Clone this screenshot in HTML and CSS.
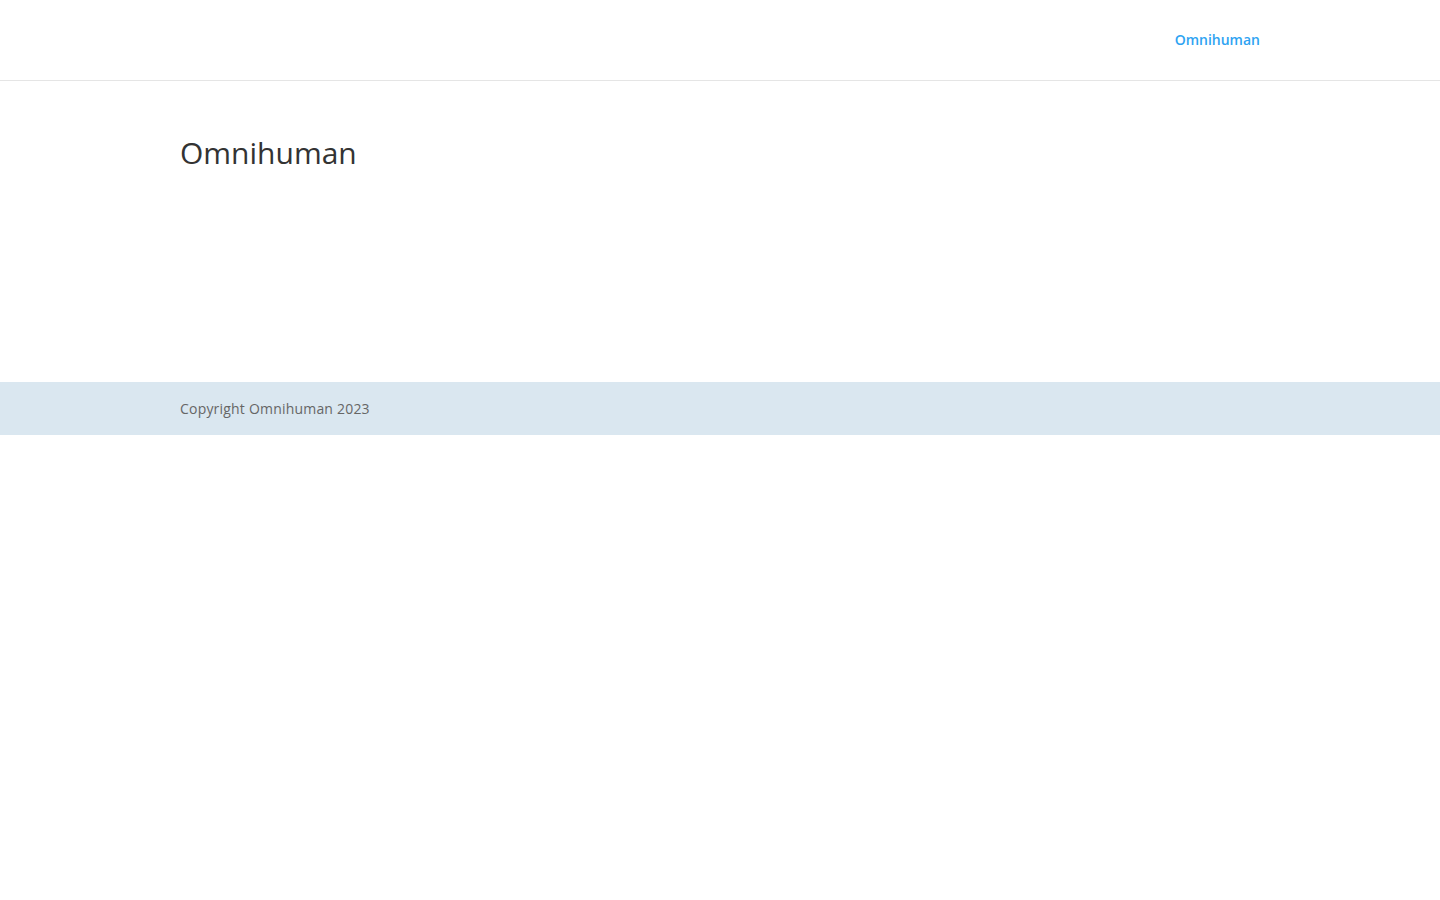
FILE: index.html
```html
<!DOCTYPE html>
<html lang="en">
<head>
<meta charset="utf-8">
<title>Omnihuman</title>
<link rel="stylesheet" href="styles.css">
</head>
<body>
<header class="site-header">
  <div class="container header-inner">
    <nav class="top-nav"><a href="#" class="nav-link">Omnihuman</a></nav>
  </div>
</header>
<main class="main-content">
  <div class="container">
    <h1 class="page-title">Omnihuman</h1>
  </div>
</main>
<footer class="footer-bottom">
  <div class="container">
    <p class="copyright">Copyright Omnihuman 2023</p>
  </div>
</footer>
</body>
</html>
```
FILE: styles.css
```css
html, body {
  margin: 0;
  padding: 0;
  background: #fff;
  font-family: "Open Sans", "Liberation Sans", Arial, sans-serif;
  color: #666;
  font-size: 14px;
}
.container {
  width: 1080px;
  margin: 0 auto;
}
.site-header {
  height: 80px;
  background: #fff;
  box-shadow: 0 1px 0 rgba(0,0,0,0.1);
  position: relative;
  z-index: 1;
}
.header-inner {
  height: 80px;
  display: flex;
  justify-content: flex-end;
  align-items: center;
}
.nav-link {
  color: #2ea3f2;
  font-weight: 600;
  font-size: 14px;
  text-decoration: none;
  line-height: 1;
  position: relative;
  top: -1px;
}
.main-content {
  padding: 58px 0 214px;
}
.page-title {
  margin: 0;
  font-size: 30px;
  line-height: 30px;
  font-weight: 500;
  color: #333;
}
.footer-bottom {
  background: #dae7f0;
  padding: 15px 0;
}
.copyright {
  margin: 0;
  line-height: 23px;
  font-size: 14px;
  letter-spacing: 0.2px;
  color: #666;
}
```
